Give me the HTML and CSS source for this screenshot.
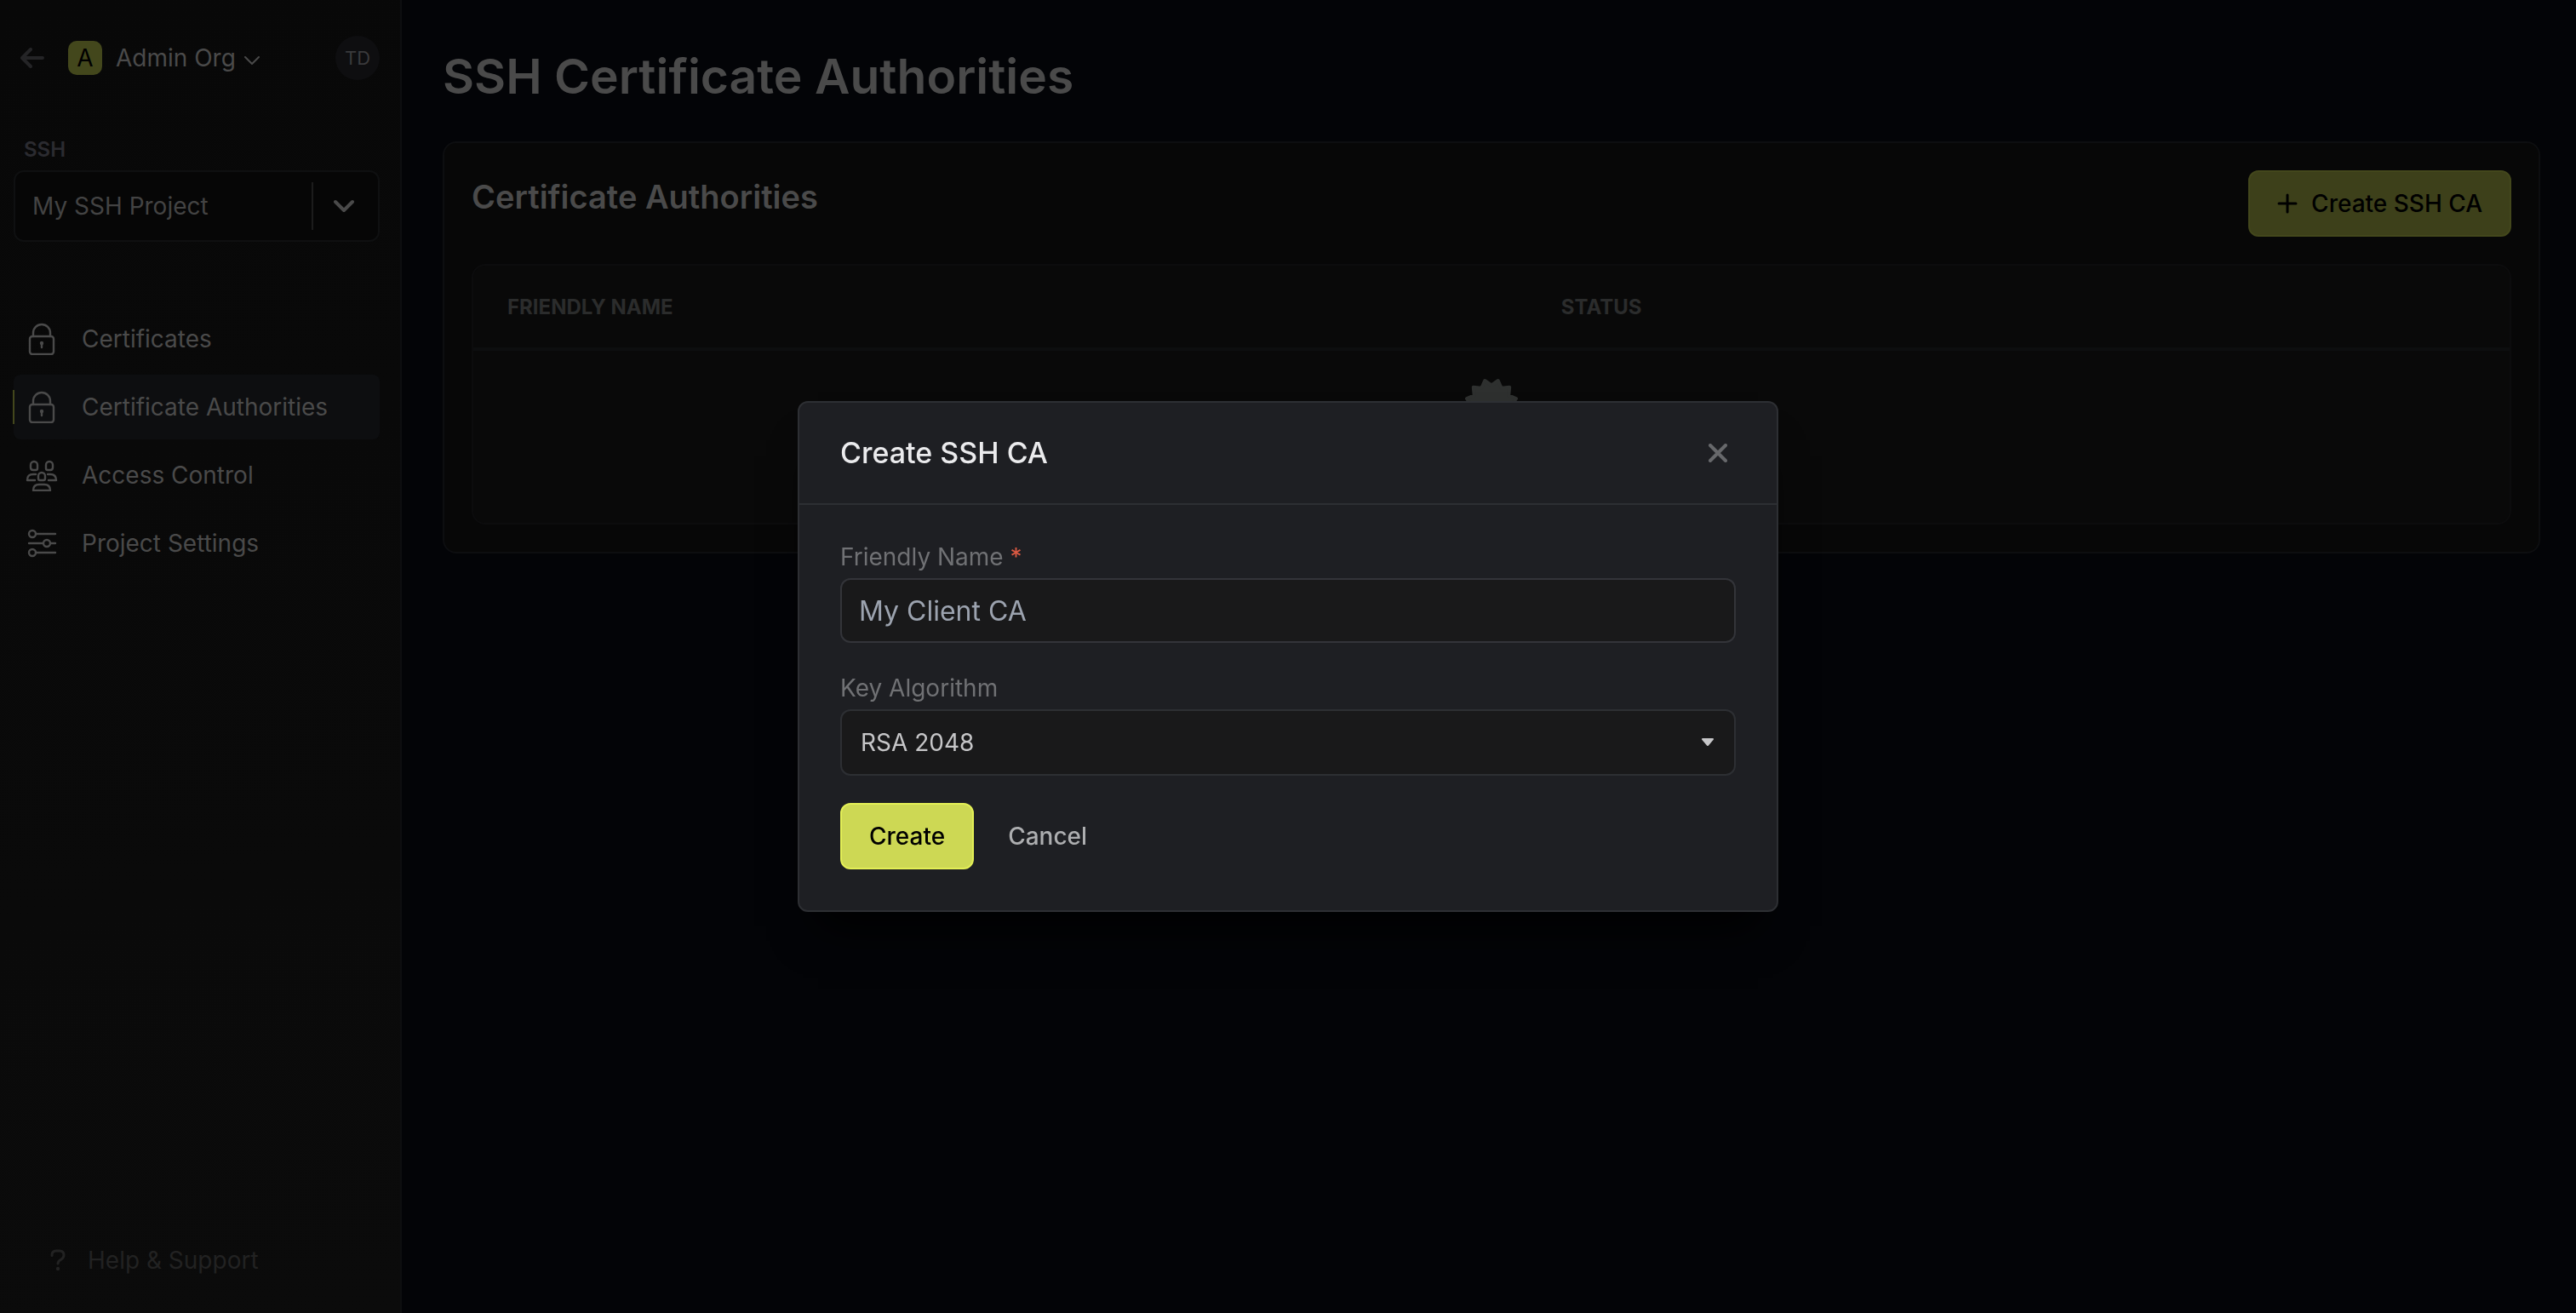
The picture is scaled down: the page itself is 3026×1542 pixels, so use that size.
FILE: index.html
```html
<!DOCTYPE html>
<html lang="en">
<head>
<meta charset="utf-8">
<meta name="viewport" content="width=device-width, initial-scale=1">
<title>SSH Certificate Authorities</title>
<link rel="stylesheet" href="styles.css">
</head>
<body>
<div class="app">
  <aside class="sidebar">
    <div class="org">
      <a class="back" href="#" aria-label="Back">
        <svg width="28" height="24" viewBox="0 0 28 24"><path d="M12 2 2 12l10 10M2 12h24" fill="none" stroke="currentColor" stroke-width="4" stroke-linecap="round" stroke-linejoin="round"/></svg>
      </a>
      <button class="org-switch" type="button">
        <span class="org-badge">A</span>
        <span class="org-name">Admin Org</span>
        <svg width="18" height="12" viewBox="0 0 18 12"><path d="m1 2 8 8 8-8" fill="none" stroke="currentColor" stroke-width="2" stroke-linecap="round" stroke-linejoin="round"/></svg>
      </button>
      <button class="avatar" type="button">TD</button>
    </div>

    <label class="project-label" for="project">SSH</label>
    <div class="project">
      <select class="project-select" id="project"><option>My SSH Project</option></select>
      <span class="project-toggle">
        <svg width="24" height="16" viewBox="0 0 24 16"><path d="m2 3 10 10L22 3" fill="none" stroke="currentColor" stroke-width="4" stroke-linecap="round" stroke-linejoin="round"/></svg>
      </span>
    </div>

    <nav class="nav">
      <a class="nav-item" href="#">
        <svg class="nav-icon" viewBox="0 0 38 38"><rect x="5" y="16" width="28" height="21" rx="3"/><path d="M9 16v-4a10 10 0 0 1 20 0v4M19 24v5"/><circle cx="19" cy="24" r="1"/></svg>
        Certificates
      </a>
      <a class="nav-item nav-item-active" href="#">
        <svg class="nav-icon" viewBox="0 0 38 38"><rect x="5" y="16" width="28" height="21" rx="3"/><path d="M9 16v-4a10 10 0 0 1 20 0v4M19 24v5"/><circle cx="19" cy="24" r="1"/></svg>
        Certificate Authorities
      </a>
      <a class="nav-item" href="#">
        <svg class="nav-icon" viewBox="0 0 38 38"><path d="M6 7a4 4 0 0 1 8 0v4q0 2-2 2H9q-3 0-3-3zM32 7a4 4 0 0 0-8 0v4q0 2 2 2h3q3 0 3-3zM15 20a4 4 0 0 1 8 0v3q0 2-2 2h-4q-2 0-2-2zM12 18H9q-7 0-7 7h9M26 18h3q7 0 7 7h-9M9 37q0-7 7-7h6q7 0 7 7z"/></svg>
        Access Control
      </a>
      <a class="nav-item" href="#">
        <svg class="nav-icon" viewBox="0 0 38 38"><circle cx="8" cy="8" r="4"/><circle cx="25" cy="19" r="4"/><circle cx="8" cy="30" r="4"/><path d="M12 8h23M4 19h17M29 19h6M12 30h23"/></svg>
        Project Settings
      </a>
    </nav>

    <a class="help" href="#">
      <svg width="18" height="26" viewBox="0 0 18 26"><path d="M2 7.500V7q0-5 5-5h4q5 0 5 5 0 3-3 5-4 2-4 5" fill="none" stroke="currentColor" stroke-width="3" stroke-linecap="round"/><circle cx="9" cy="23" r="2.200" fill="currentColor"/></svg>
      Help &amp; Support
    </a>
  </aside>

  <main class="main">
    <h1 class="page-title">SSH Certificate Authorities</h1>
    <section class="card">
      <header class="card-head">
        <h2 class="card-title">Certificate Authorities</h2>
        <button class="button button-dim" type="button">
          <svg width="24" height="24" viewBox="0 0 24 24"><path d="M12 2v20M2 12h20" fill="none" stroke="currentColor" stroke-width="3" stroke-linecap="round"/></svg>
          Create SSH CA
        </button>
      </header>
      <div class="table-box">
        <table class="table">
          <thead>
            <tr><th class="col-name" scope="col">FRIENDLY NAME</th><th scope="col">STATUS</th></tr>
          </thead>
          <tbody>
            <tr>
              <td class="empty" colspan="2">
                <svg width="64" height="64" viewBox="-32 -32 64 64"><path d="M0-23.500 7.800-29 11.700-20.300 21.200-21.200 20.300-11.700 29-7.800 23.500 0 29 7.800 20.300 11.700 21.200 21.200 11.700 20.300 7.800 29 0 23.500-7.800 29-11.700 20.300-21.200 21.200-20.300 11.700-29 7.800-23.500 0-29-7.800-20.300-11.700-21.200-21.200-11.700-20.300-7.800-29z" fill="currentColor" stroke="currentColor" stroke-width="4" stroke-linejoin="round"/></svg>
              </td>
            </tr>
          </tbody>
        </table>
      </div>
    </section>
  </main>
</div>

<div class="overlay">
  <div class="modal" role="dialog" aria-modal="true" aria-labelledby="modal-title">
    <header class="modal-head">
      <h2 class="modal-title" id="modal-title">Create SSH CA</h2>
      <button class="close" type="button" aria-label="Close">
        <svg width="22" height="22" viewBox="0 0 22 22"><path d="m2 2 18 18M20 2 2 20" fill="none" stroke="currentColor" stroke-width="4" stroke-linecap="round"/></svg>
      </button>
    </header>
    <form class="form">
      <div class="field">
        <label class="label" for="name">Friendly Name <span class="required">*</span></label>
        <input class="control input" id="name" type="text" placeholder="My Client CA">
      </div>
      <div class="field">
        <label class="label" for="algorithm">Key Algorithm</label>
        <div class="select-wrap">
          <select class="control select" id="algorithm"><option>RSA 2048</option></select>
          <svg class="caret" width="16" height="10" viewBox="0 0 16 10"><path d="M2 1h12l-6 7z" fill="currentColor" stroke="currentColor" stroke-width="2" stroke-linejoin="round"/></svg>
        </div>
      </div>
      <div class="actions">
        <button class="button" type="button">Create</button>
        <button class="cancel" type="button">Cancel</button>
      </div>
    </form>
  </div>
</div>
</body>
</html>
```
FILE: styles.css
```css
* {
  box-sizing: border-box;
}

body {
  margin: 0;
  background: #030407;
  color: #4a4a4a;
  font-family: Inter, "Liberation Sans", sans-serif;
  font-size: 28px;
  line-height: 40px;
}

button,
input,
select {
  margin: 0;
  padding: 0;
  border: 0;
  background: none;
  color: inherit;
  font: inherit;
}

a {
  color: inherit;
  text-decoration: none;
}

h1,
h2 {
  margin: 0;
}

svg {
  display: block;
  flex: none;
}

.app {
  display: flex;
  min-height: 100vh;
}

/* Sidebar */

.sidebar {
  display: flex;
  flex: none;
  flex-direction: column;
  width: 472px;
  padding: 42px 24px 42px 16px;
  border-right: 2px solid #0d0e10;
  background: linear-gradient(170deg, #080808, #0b0b0b);
}

.org {
  display: flex;
  align-items: center;
  padding-left: 8px;
}

.back {
  margin-right: 28px;
  color: #242426;
}

.org-switch {
  display: flex;
  align-items: center;
}

.org-switch svg {
  margin: 6px 0 0 10px;
}

.org-badge {
  width: 40px;
  margin-right: 16px;
  border-radius: 10px;
  background: #43471c;
  color: #000;
}

.avatar {
  width: 52px;
  height: 52px;
  margin-left: auto;
  border-radius: 50%;
  background: #0e0e10;
  color: #3a3a3c;
  font-size: 22px;
}

.project-label {
  margin: 62px 0 4px 12px;
  color: #2b2b30;
  font-size: 24px;
  font-weight: 600;
}

.project {
  display: flex;
  position: relative;
  align-items: center;
  border: 2px solid #0f1011;
  border-radius: 12px;
  background: #060606;
}

.project-select {
  width: 100%;
  height: 80px;
  padding: 0 80px 0 20px;
  appearance: none;
  color: #434343;
}

.project-toggle {
  display: flex;
  position: absolute;
  right: 0;
  align-items: center;
  justify-content: center;
  width: 78px;
  height: 56px;
  padding-right: 4px;
  border-left: 2px solid #1c1c1c;
  pointer-events: none;
}

.nav {
  display: flex;
  flex-direction: column;
  gap: 4px;
  margin-top: 76px;
}

.nav-item {
  display: flex;
  position: relative;
  align-items: center;
  gap: 28px;
  height: 76px;
  padding-left: 14px;
  border-radius: 8px;
}

.nav-item-active {
  background: #0d0e10;
}

.nav-item-active::before {
  position: absolute;
  left: -1px;
  width: 2px;
  height: 40px;
  background: #43471c;
  content: "";
}

.nav-icon {
  width: 38px;
  height: 38px;
  fill: none;
  stroke: currentColor;
  stroke-linecap: round;
  stroke-linejoin: round;
  stroke-width: 2.4;
}

.help {
  display: flex;
  align-items: center;
  gap: 26px;
  margin-top: auto;
  padding-left: 43px;
  color: #222;
}

/* Page */

.main {
  flex: 1;
  min-width: 0;
  padding: 54px 42px 48px 48px;
}

.page-title {
  margin-bottom: 40px;
  font-size: 57px;
  font-weight: 600;
  line-height: 72px;
}

.card {
  padding: 32px;
  border: 2px solid #0d0e10;
  border-radius: 16px;
  background: #070707;
}

.card-head {
  display: flex;
  align-items: flex-start;
  justify-content: space-between;
  margin-bottom: 32px;
}

.card-title {
  font-size: 38px;
  font-weight: 600;
  line-height: 62px;
}

.table-box {
  border: 2px solid #0c0c0d;
  border-radius: 16px;
  background: #090909;
}

.table {
  width: 100%;
  border-collapse: separate;
  border-spacing: 0;
  table-layout: fixed;
}

.table th {
  height: 100px;
  padding: 2px 40px 0;
  border-bottom: 4px solid #0d0e0f;
  color: #2b2c2c;
  font-size: 24px;
  font-weight: 700;
  text-align: left;
}

.table .col-name {
  width: 51.75%;
}

.empty {
  height: 202px;
  padding: 32px;
  color: #2e302f;
  vertical-align: top;
}

.empty svg {
  margin: 0 auto;
}

/* Buttons */

.button {
  display: flex;
  align-items: center;
  gap: 16px;
  height: 78px;
  padding: 0 32px;
  border: 2px solid #e3ef56;
  border-radius: 12px;
  background: #cdd854;
  color: #000;
  font-weight: 500;
}

.button-dim {
  border-color: #43471c;
  background: #3d401a;
}

.cancel {
  color: #adaeb0;
  font-weight: 500;
}

/* Dialog */

.overlay {
  display: flex;
  position: fixed;
  inset: 0;
  align-items: center;
  justify-content: center;
}

.modal {
  width: 1152px;
  max-width: 100%;
  border: 2px solid #2d2f33;
  border-radius: 12px;
  background: #1e1f23;
  box-shadow: 0 40px 50px -24px #000;
}

.modal-head {
  display: flex;
  align-items: center;
  justify-content: space-between;
  height: 120px;
  padding: 0 58px 0 48px;
  border-bottom: 2px solid #2d2f33;
}

.modal-title {
  color: #ebebed;
  font-size: 34px;
  font-weight: 500;
}

.close {
  color: #67686b;
}

.form {
  display: flex;
  flex-direction: column;
  gap: 32px;
  padding: 40px 48px 48px;
}

.field {
  display: flex;
  flex-direction: column;
  gap: 4px;
}

.label {
  color: #707174;
  line-height: 42px;
}

.required {
  color: #dc5a43;
}

.control {
  width: 100%;
  height: 76px;
  border: 2px solid #333439;
  border-radius: 12px;
  background: #19191a;
}

.input {
  padding: 0 20px;
  font-size: 32px;
}

.input::placeholder {
  color: #9ca3af;
  opacity: 1;
}

.select-wrap {
  display: flex;
  position: relative;
  align-items: center;
}

.select {
  height: 78px;
  padding: 0 80px 0 22px;
  border-color: #2d2f33;
  appearance: none;
  color: #c6c6c8;
}

.caret {
  position: absolute;
  right: 25px;
  color: #c6c6c8;
  pointer-events: none;
}

.actions {
  display: flex;
  align-items: center;
  gap: 40px;
}
```
